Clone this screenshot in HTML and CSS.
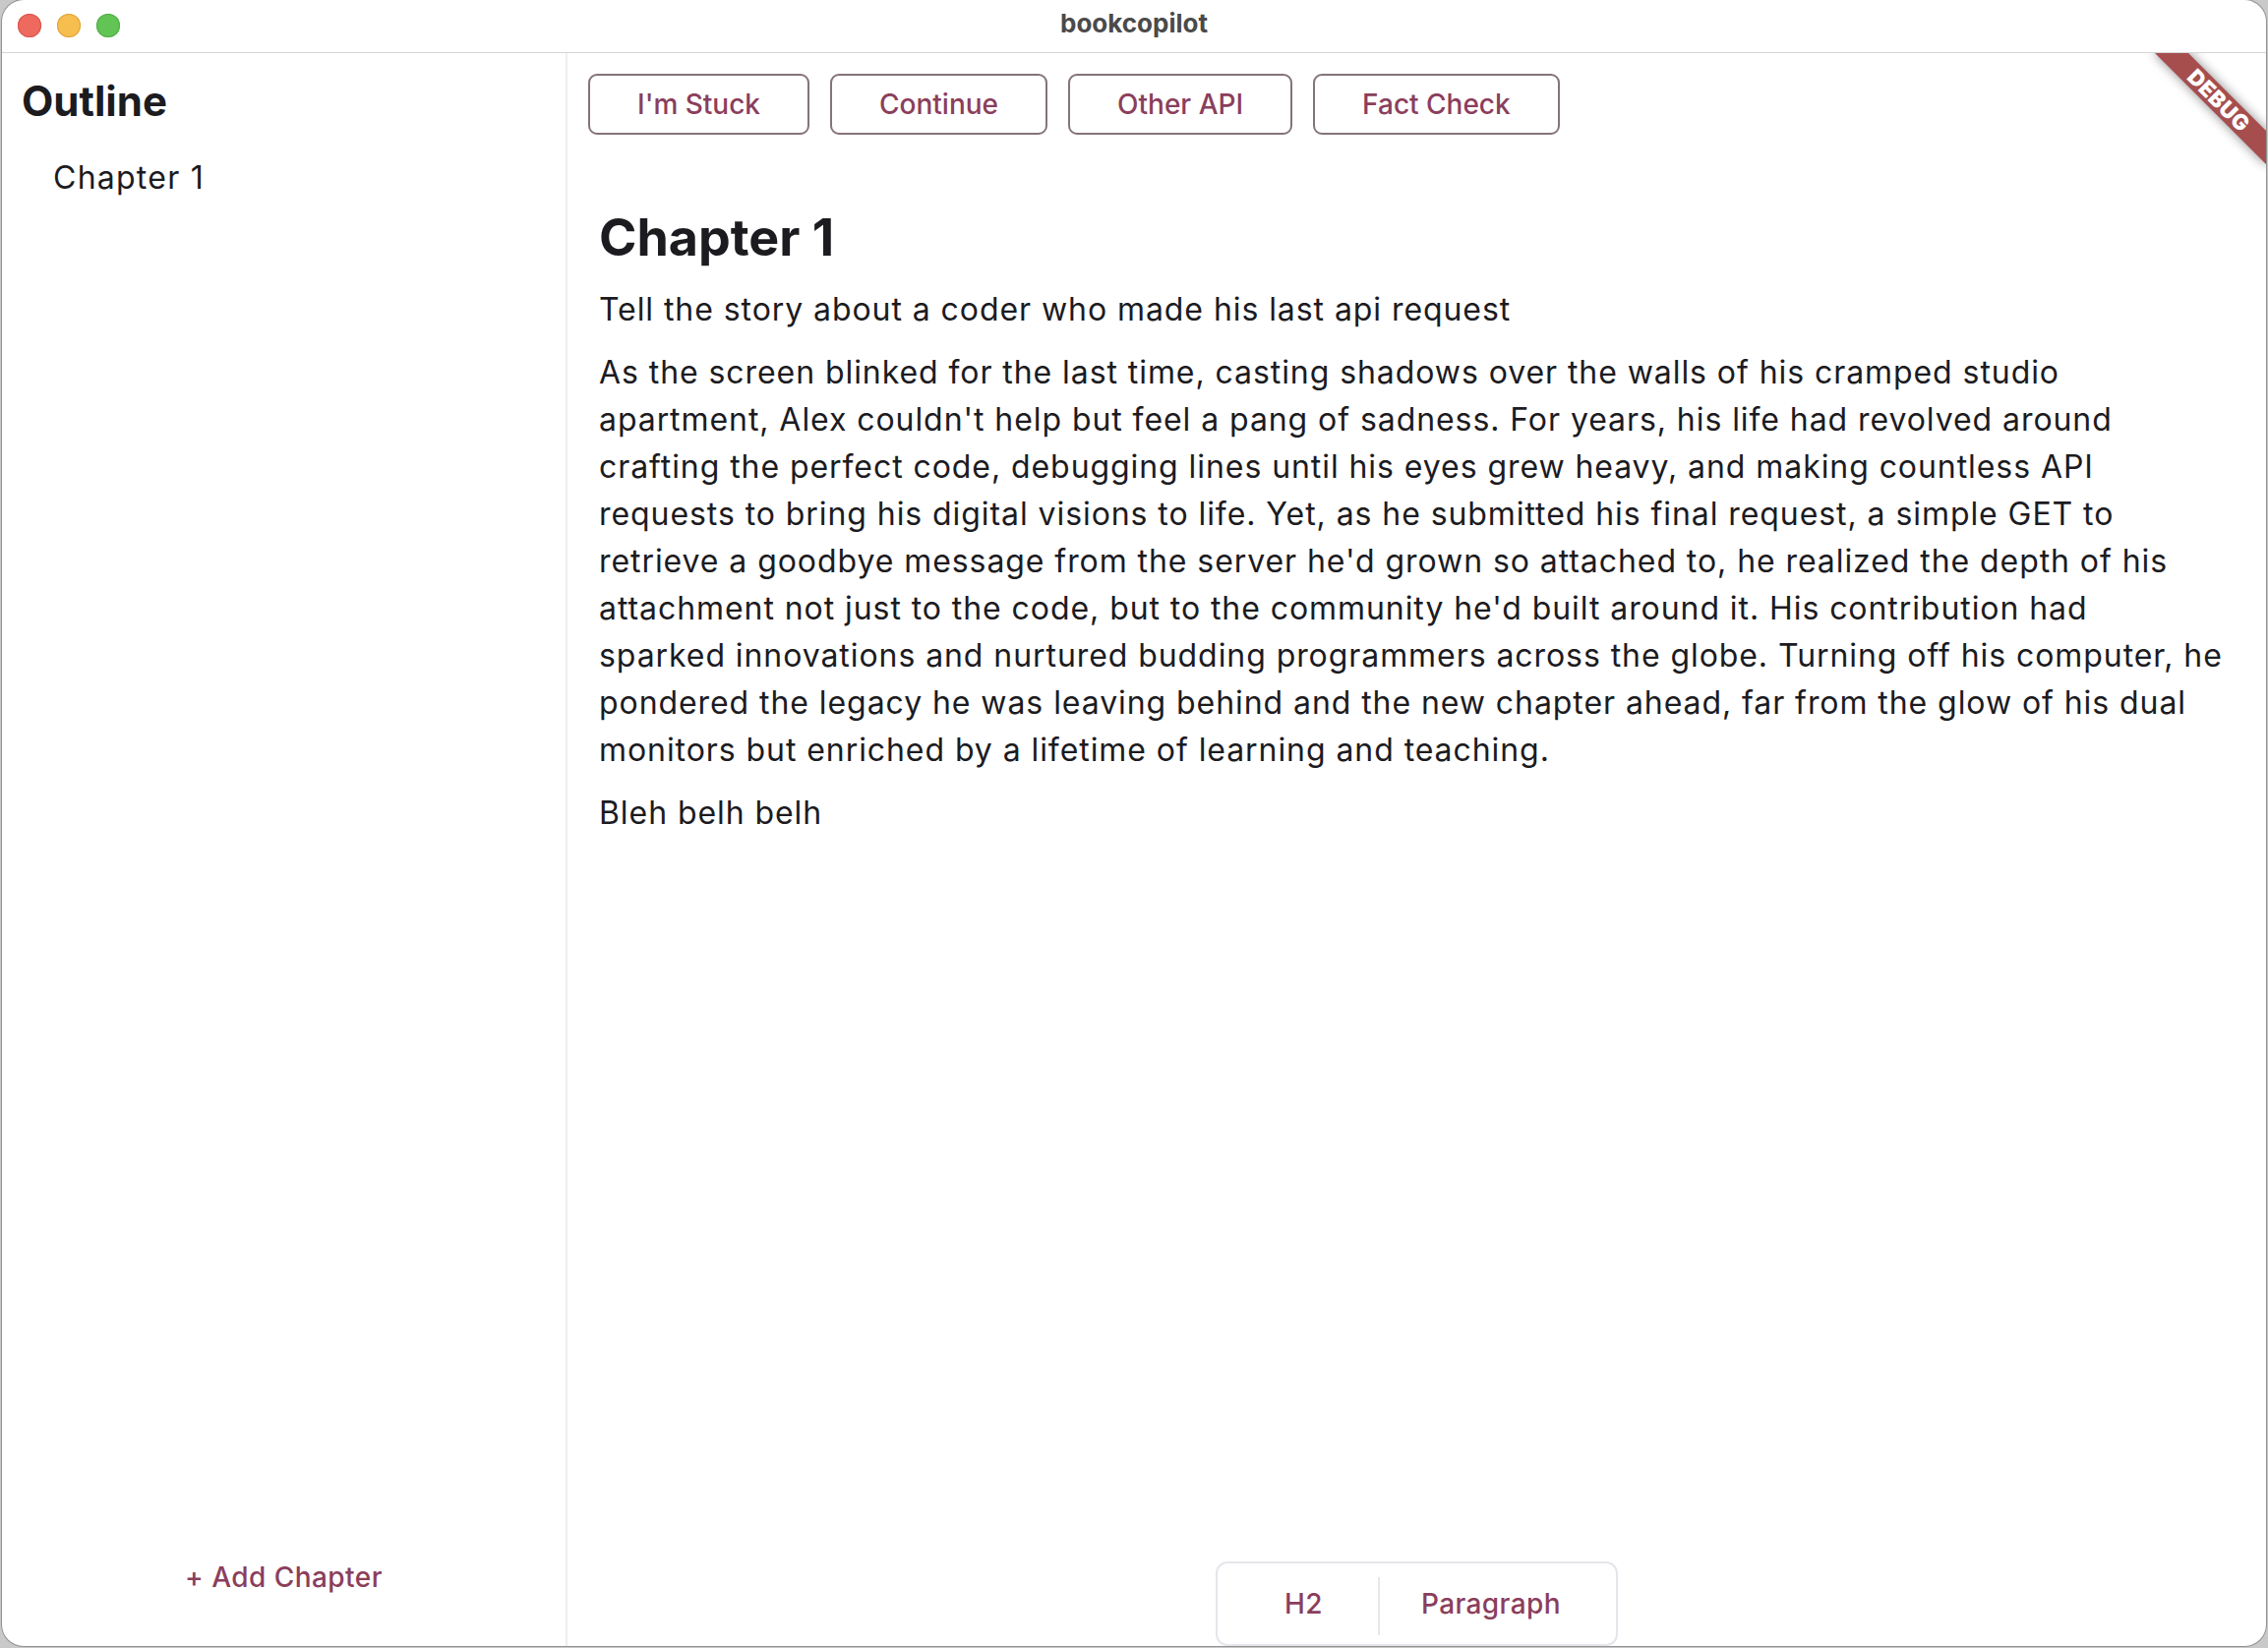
FILE: index.html
```html
<!DOCTYPE html>
<html lang="en">
<head>
<meta charset="utf-8">
<title>bookcopilot</title>
<link rel="stylesheet" href="styles.css">
</head>
<body>
<div class="window">
  <header class="titlebar">
    <div class="lights">
      <span class="light red"></span>
      <span class="light yellow"></span>
      <span class="light green"></span>
    </div>
    <div class="title">bookcopilot</div>
    <div></div>
  </header>
  <div class="content">
    <aside class="sidebar">
      <h2 class="outline-title">Outline</h2>
      <ul class="chapters">
        <li class="chapter">Chapter 1</li>
      </ul>
      <button class="add-chapter">+ Add Chapter</button>
    </aside>
    <main class="main">
      <div class="actions">
        <button class="action">I'm Stuck</button>
        <button class="action">Continue</button>
        <button class="action">Other API</button>
        <button class="action">Fact Check</button>
      </div>
      <article class="editor">
        <h1 class="doc-title">Chapter 1</h1>
        <p class="doc-p">Tell the story about a coder who made his last api request</p>
        <p class="doc-p story">As the screen blinked for the last time, casting shadows over the walls of his cramped studio<br>apartment, Alex couldn't help but feel a pang of sadness. For years, his life had revolved around<br>crafting the perfect code, debugging lines until his eyes grew heavy, and making countless API<br>requests to bring his digital visions to life. Yet, as he submitted his final request, a simple GET to<br>retrieve a goodbye message from the server he'd grown so attached to, he realized the depth of his<br>attachment not just to the code, but to the community he'd built around it. His contribution had<br>sparked innovations and nurtured budding programmers across the globe. Turning off his computer, he<br>pondered the legacy he was leaving behind and the new chapter ahead, far from the glow of his dual<br>monitors but enriched by a lifetime of learning and teaching.</p>
        <p class="doc-p">Bleh belh belh</p>
      </article>
      <div class="toolbar">
        <button class="tool tool-h2">H2</button>
        <span class="tool-sep"></span>
        <button class="tool tool-p">Paragraph</button>
      </div>
      <div class="debug-banner"><div class="ribbon">DEBUG</div></div>
    </main>
  </div>
</div>
</body>
</html>
```

FILE: styles.css
```css
* { box-sizing: border-box; }

html, body {
  margin: 0;
  padding: 0;
}

body {
  background: #c9c9c9;
  font-family: Inter, "Liberation Sans", sans-serif;
  color: #1c1b1f;
  width: 2306px;
  height: 1676px;
  overflow: hidden;
}

.window {
  margin-left: 2px;
  width: 2302px;
  height: 1674px;
  background: #ffffff;
  border-radius: 22px;
  overflow: hidden;
  display: flex;
  flex-direction: column;
  box-shadow: 0 0 0 1px rgba(0, 0, 0, 0.28);
}

.titlebar {
  height: 54px;
  flex: none;
  border-bottom: 1px solid #d6d6d6;
  display: grid;
  grid-template-columns: 1fr auto 1fr;
  align-items: start;
}

.lights {
  display: flex;
  gap: 16px;
  padding: 14px 0 0 16px;
}

.light {
  width: 24px;
  height: 24px;
  border-radius: 50%;
  display: block;
}

.light.red { background: #ee6a5f; box-shadow: inset 0 0 0 1px #d9534a; }
.light.yellow { background: #f6be4f; box-shadow: inset 0 0 0 1px #dea33a; }
.light.green { background: #61c454; box-shadow: inset 0 0 0 1px #4fad43; }

.title {
  padding-top: 8px;
  font-weight: 700;
  font-size: 26px;
  line-height: 32px;
  color: #4a4a4a;
}

.content {
  flex: 1;
  display: flex;
  min-height: 0;
}

.sidebar {
  width: 575px;
  flex: none;
  border-right: 2px solid #efefef;
  display: flex;
  flex-direction: column;
  padding: 24px 0 30px 20px;
}

.outline-title {
  margin: 0;
  font-size: 42px;
  line-height: 50px;
  font-weight: 700;
  color: #1c1b1f;
}

.chapters {
  list-style: none;
  margin: 29px 0 0;
  padding: 0 0 0 32px;
}

.chapter {
  font-size: 32px;
  line-height: 48px;
  letter-spacing: 1.25px;
  color: #1c1b1f;
}

.add-chapter {
  margin-top: auto;
  align-self: center;
  margin-left: -20px;
  height: 80px;
  padding: 0 32px;
  border: none;
  background: transparent;
  font-family: inherit;
  font-size: 28px;
  font-weight: 500;
  letter-spacing: 0.45px;
  color: #8b3e5c;
}

.main {
  flex: 1;
  position: relative;
  display: flex;
  flex-direction: column;
  min-width: 0;
}

.actions {
  display: flex;
  gap: 21px;
  padding: 21px 0 0 21px;
}

.action {
  height: 62px;
  padding: 0 48px;
  border: 2px solid #85737a;
  border-radius: 9px;
  background: #ffffff;
  font-family: inherit;
  font-size: 28px;
  font-weight: 500;
  color: #8b3e5c;
}

.editor {
  flex: 1;
  padding: 73px 32px 0 32px;
}

.doc-title {
  margin: 0 0 17px;
  font-size: 52px;
  line-height: 64px;
  font-weight: 700;
  color: #1c1b1f;
}

.doc-p {
  margin: 0 0 16px;
  font-size: 32px;
  line-height: 48px;
  letter-spacing: 0.93px;
  color: #1c1b1f;
}

.story {
  white-space: nowrap;
}

.toolbar {
  align-self: center;
  display: flex;
  align-items: center;
  height: 86px;
  padding: 0 18px;
  border: 2px solid #e7e4eb;
  border-radius: 12px;
  background: #ffffff;
}

.tool {
  height: 60px;
  border: none;
  background: transparent;
  font-family: inherit;
  font-size: 28px;
  font-weight: 500;
  letter-spacing: 0.4px;
  color: #8b3e5c;
}

.tool-h2 { padding: 0 56px 0 50px; }
.tool-p { padding: 0 38px 0 42px; }

.tool-sep {
  width: 2px;
  height: 59px;
  background: #e8e6ec;
  margin-top: 5px;
}

.debug-banner {
  position: absolute;
  top: 0;
  right: 0;
  width: 200px;
  height: 200px;
  overflow: hidden;
  pointer-events: none;
}

.ribbon {
  position: absolute;
  left: 72px;
  top: 36px;
  width: 160px;
  height: 24px;
  transform: rotate(45deg);
  background: #a64e4e;
  box-shadow: 0 0 12px rgba(0, 0, 0, 0.45);
  color: #ffffff;
  font-size: 22px;
  font-weight: 900;
  letter-spacing: 0.5px;
  line-height: 24px;
  text-align: center;
}
```
